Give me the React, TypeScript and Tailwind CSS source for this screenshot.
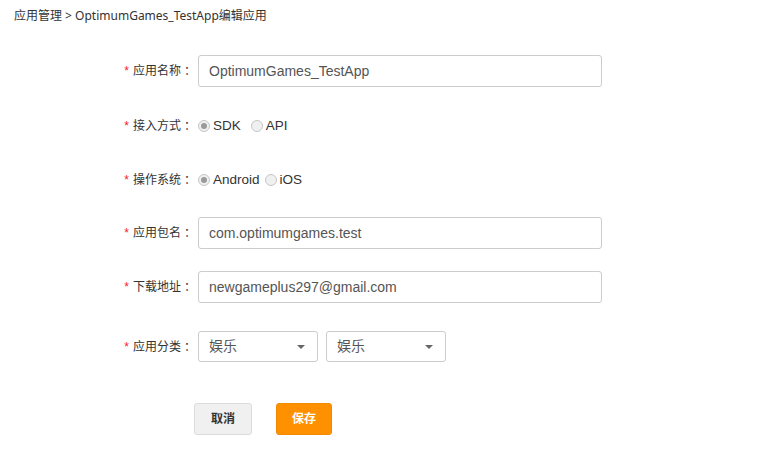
import React from "react";

const FONT = {
  fontFamily: '"Liberation Sans", "Noto Sans CJK SC", sans-serif',
};

// TC font keeps the full-width colon centred in its cell, like the reference
const COLON = { fontFamily: '"Noto Sans CJK TC", sans-serif' };

function Label({ text }: { text: string }) {
  return (
    <div className="flex w-[193px] shrink-0 items-center justify-end text-[12px] leading-[16px] text-[#333]">
      <span className="mr-[4px] text-[12px] text-[#f5222d]">*</span>
      <span>{text}</span>
      <span style={COLON}>：</span>
    </div>
  );
}

function TextInput({ value }: { value: string }) {
  return (
    <div className="ml-[5px] flex h-[32px] w-[404px] items-center rounded-[3px] border border-[#cccccc] bg-white px-[10px] text-[14px] text-[#555]">
      {value}
    </div>
  );
}

function Radio({ label, checked, className }: { label: string; checked?: boolean; className?: string }) {
  return (
    <div className={"flex items-center " + (className ?? "")}>
      <span className="flex h-[12px] w-[12px] items-center justify-center rounded-full border border-[#c6c6c6] bg-[#f0f0f0]">
        {checked && <span className="h-[6px] w-[6px] rounded-full bg-[#9a9a9a]" />}
      </span>
      <span className="ml-[3px] text-[13.5px] leading-[16px] text-[#333]">{label}</span>
    </div>
  );
}

function Select({ value, className }: { value: string; className?: string }) {
  return (
    <div
      className={
        "flex h-[31px] w-[120px] items-center justify-between rounded-[3px] border border-[#cccccc] bg-white pl-[10px] pr-[12px] text-[14px] text-[#555] " +
        (className ?? "")
      }
    >
      <span>{value}</span>
      <span className="h-0 w-0 border-x-[4px] border-t-[4px] border-x-transparent border-t-[#666]" />
    </div>
  );
}

export default function App() {
  return (
    <div className="min-h-[474px] w-[773px] bg-white" style={FONT}>
      <div
        className="px-[14px] pt-[8px] text-[12px] leading-[16px] text-[#333]"
        style={{ fontFamily: '"Noto Sans", "Noto Sans CJK SC", sans-serif' }}
      >
        应用管理 &gt; OptimumGames_TestApp编辑应用
      </div>

      <div className="mt-[31px] flex flex-col">
        <div className="flex h-[32px] items-center">
          <Label text="应用名称" />
          <TextInput value="OptimumGames_TestApp" />
        </div>

        <div className="mt-[22px] flex h-[32px] items-center pt-[1px]">
          <Label text="接入方式" />
          <div className="ml-[5px] flex items-center">
            <Radio label="SDK" checked className="mr-[10px]" />
            <Radio label="API" />
          </div>
        </div>

        <div className="mt-[22px] flex h-[32px] items-center pt-[1px]">
          <Label text="操作系统" />
          <div className="ml-[5px] flex items-center">
            <Radio label="Android" checked className="mr-[5px]" />
            <Radio label="iOS" />
          </div>
        </div>

        <div className="mt-[22px] flex h-[32px] items-center">
          <Label text="应用包名" />
          <TextInput value="com.optimumgames.test" />
        </div>

        <div className="mt-[22px] flex h-[32px] items-center">
          <Label text="下载地址" />
          <TextInput value="newgameplus297@gmail.com" />
        </div>

        <div className="mt-[28px] flex h-[31px] items-center">
          <Label text="应用分类" />
          <Select value="娱乐" className="ml-[5px]" />
          <Select value="娱乐" className="ml-[8px]" />
        </div>

        <div className="mt-[41px] flex pl-[194px]">
          <button className="h-[32px] w-[58px] rounded-[3px] border border-[#dcdcdc] bg-[#f0f0f0] text-[12px] font-bold text-[#333]">
            取消
          </button>
          <button className="ml-[24px] h-[32px] w-[56px] rounded-[3px] border border-[#f08a00] bg-[#ff9100] text-[12px] font-bold text-white">
            保存
          </button>
        </div>
      </div>
    </div>
  );
}
